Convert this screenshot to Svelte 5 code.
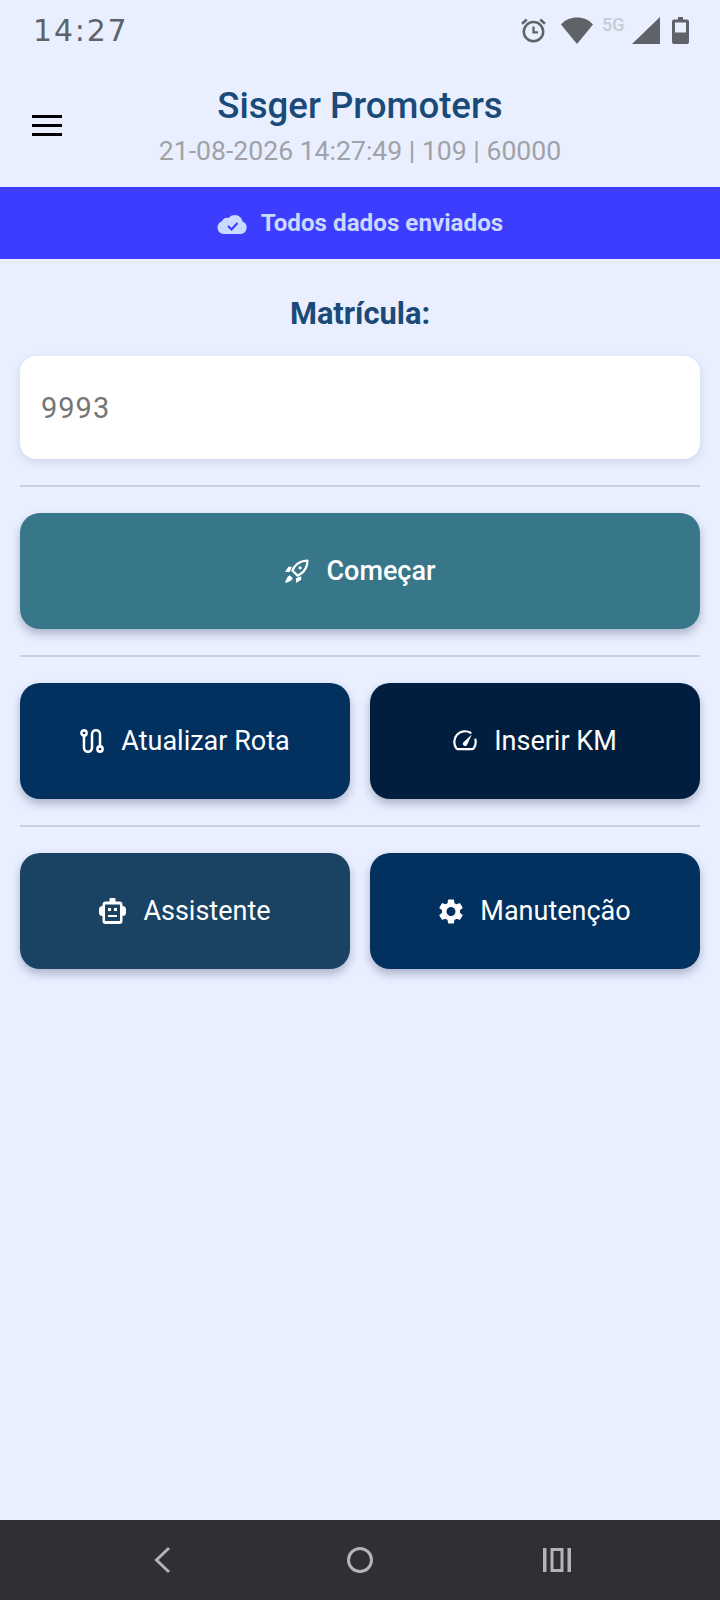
<script lang="ts">
  let matricula = $state('9993');
</script>

<div class="screen">
  <div class="status-bar">
    <span class="clock">14:27</span>
    <div class="status-icons">
      <svg class="alarm" viewBox="0 0 24 24" fill="none" stroke="#5f6368" stroke-width="2.2">
        <circle cx="12" cy="13" r="8.6" />
        <path d="M12 8.5V13.6H16" stroke-width="2" />
        <path d="M1.8 6 6 2.2M22.2 6 18 2.2" />
      </svg>
      <svg class="wifi" viewBox="0 0 32 27"><path d="M16 27 0 7.5C4 3 9.5 0.5 16 0.5S28 3 32 7.5Z" fill="#5f6368" /></svg>
      <span class="net">5G</span>
      <svg class="signal" viewBox="0 0 28 27"><path d="M28 0V27H0Z" fill="#5f6368" /></svg>
      <svg class="battery" viewBox="0 0 17 27">
        <path fill-rule="evenodd" fill="#5f6368" d="M6 0h5v2.5h4a2 2 0 0 1 2 2V25a2 2 0 0 1-2 2H2a2 2 0 0 1-2-2V4.500a2 2 0 0 1 2-2h4ZM3 5.500V15.500H14V5.500Z" />
      </svg>
    </div>
  </div>

  <header class="app-header">
    <button class="menu" aria-label="Menu"><span></span><span></span><span></span></button>
    <div class="titles">
      <h1>Sisger Promoters</h1>
      <p>21-08-2026 14:27:49 | 109 | 60000</p>
    </div>
  </header>

  <div class="banner">
    <svg viewBox="0 0 30 22" class="cloud">
      <path fill="#c9d9ff" d="M6.5 22A6.500 6.500 0 0 1 4.500 9.300 6 6 0 0 1 11 6 8 8 0 0 1 25 9.500 6.500 6.500 0 0 1 23.500 22Z" />
      <path d="M10.500 14 14 17.500 20 11" fill="none" stroke="#3d3dff" stroke-width="2.200" />
    </svg>
    <span>Todos dados enviados</span>
  </div>

  <main class="content">
    <label for="mat">Matrícula:</label>
    <input id="mat" bind:value={matricula} />
    <hr />
    <button class="btn teal">
      <svg class="ic-rocket" viewBox="0 0 24 24">
        <path fill="none" stroke="currentColor" stroke-width="2.200" stroke-linejoin="round" d="M22.500 1.500c-5.500 0-9.500 2-12.500 6L8 11l5 5 3.500-2c4-3 6-7 6-12.500z" />
        <circle cx="15.500" cy="8.500" r="1.600" fill="currentColor" />
        <path fill="currentColor" d="M7.500 7.500H4.200L1 12.500h4.500zM16.500 16.500v3.300L11.500 23v-4.500zM5.500 15.500c-2.500 1-3.500 4-4.500 7.500 3.500-1 6.500-2 7.500-4.500z" />
      </svg>
      Começar
    </button>
    <hr />
    <div class="row">
      <button class="btn navy">
        <svg class="ic-route" viewBox="1.500 1.500 21 21" fill="none" stroke="currentColor" stroke-width="2.200" stroke-linecap="round">
          <circle cx="5" cy="5" r="2.300" />
          <circle cx="19" cy="19" r="2.300" />
          <path d="M5 7.300V18a3.500 3.500 0 0 0 7 0V6a3.500 3.500 0 0 1 7 0v10.700" />
        </svg>
        Atualizar Rota
      </button>
      <button class="btn dark">
        <svg class="ic-gauge" viewBox="0 0 24 24">
          <path fill="none" stroke="currentColor" stroke-width="2.200" stroke-linecap="round" stroke-linejoin="round" d="M17.500 3.800A10.700 10.700 0 0 0 3.500 19.500q.6.700 1.500.7h14q.9 0 1.500-.7A10.700 10.700 0 0 0 22.400 10.500" />
          <path fill="currentColor" d="M18.800 5.500 14 16a2.300 2.300 0 0 1-3.800-2.600z" />
        </svg>
        Inserir KM
      </button>
    </div>
    <hr />
    <div class="row">
      <button class="btn slate">
        <svg class="ic-robot" viewBox="0 0 27 26">
          <path fill="currentColor" fill-rule="evenodd" d="M11.500 0h4a1 1 0 0 1 1 1v2.500h4a3 3 0 0 1 3 3V8A3.500 3.500 0 0 1 27 11.500v3a3.500 3.500 0 0 1-3.500 3.500v5a3 3 0 0 1-3 3h-14a3 3 0 0 1-3-3v-5A3.500 3.500 0 0 1 0 14.500v-3A3.500 3.500 0 0 1 3.500 8V6.500a3 3 0 0 1 3-3h4V1a1 1 0 0 1 1-1ZM6.500 6.500a.5.5 0 0 0-.5.5v15.500a.5.5 0 0 0 .5.5h14a.5.5 0 0 0 .5-.5V7a.5.5 0 0 0-.5-.5ZM9 10h3v3H9Zm6 0h3v3h-3ZM9 17h9v2H9Z" />
        </svg>
        Assistente
      </button>
      <button class="btn navy">
        <svg class="ic-cog" viewBox="2.500 2 19 20">
          <path fill="currentColor" d="M19.140 12.940c.04-.3.06-.61.06-.94 0-.32-.02-.64-.07-.94l2.030-1.580c.18-.14.23-.41.12-.61l-1.920-3.320c-.12-.22-.37-.29-.59-.22l-2.390.96c-.5-.38-1.030-.7-1.620-.94l-.36-2.540c-.04-.24-.24-.41-.48-.41h-3.840c-.24 0-.43.17-.47.41l-.36 2.540c-.59.24-1.130.57-1.620.94l-2.390-.96c-.22-.08-.47 0-.59.22L2.740 8.870c-.12.21-.08.47.12.61l2.030 1.580c-.05.3-.09.63-.09.94s.02.64.07.94l-2.030 1.580c-.18.14-.23.41-.12.61l1.920 3.320c.12.22.37.29.59.22l2.390-.96c.5.38 1.030.7 1.620.94l.36 2.540c.05.24.24.41.48.41h3.840c.24 0 .44-.17.47-.41l.36-2.540c.59-.24 1.130-.56 1.620-.94l2.390.96c.22.08.47 0 .59-.22l1.920-3.320c.12-.22.07-.47-.12-.61l-2.010-1.580zM12 15.600c-1.980 0-3.600-1.620-3.600-3.600s1.620-3.600 3.600-3.600 3.600 1.620 3.600 3.600-1.620 3.600-3.600 3.600z" />
        </svg>
        Manutenção
      </button>
    </div>
  </main>

  <nav class="nav-bar">
    <svg viewBox="0 0 18 28" class="back"><path d="M16 2 3.500 14 16 26" fill="none" stroke="#b4b4b6" stroke-width="3" /></svg>
    <span class="home"></span>
    <svg viewBox="0 0 28 24" class="recents">
      <path fill="#b4b4b6" fill-rule="evenodd" d="M0 0h3.500v24H0ZM24.500 0H28v24h-3.500ZM7.500 0h13v24h-13ZM10.500 3v18h7V3Z" />
    </svg>
  </nav>
</div>

<style>
  :global(body) { background: #e9efff; }
  .screen { width: 720px; height: 1600px; display: flex; flex-direction: column; background: #e9efff; font-family: Roboto, sans-serif; }

  .status-bar { height: 62px; display: flex; justify-content: space-between; align-items: flex-start; padding: 14px 31px 0 33px; box-sizing: border-box; }
  .clock { font-family: "DejaVu Sans", sans-serif; font-size: 30px; line-height: 34px; letter-spacing: 1.8px; color: #5f6368; }
  .status-icons { display: flex; align-items: flex-start; padding-top: 3px; }
  .status-icons svg { display: block; }
  .alarm { width: 27px; height: 27px; margin-right: 14px; }
  .wifi { width: 32px; height: 27px; margin-right: 9px; }
  .net { font-size: 18px; line-height: 16px; font-weight: 500; color: #c6cad4; width: 26px; margin-right: 4px; }
  .signal { width: 28px; height: 27px; margin-right: 12px; }
  .battery { width: 17px; height: 27px; }

  .app-header { height: 125px; display: flex; position: relative; justify-content: center; }
  .menu { position: absolute; left: 32px; top: 53px; width: 30px; display: flex; flex-direction: column; gap: 6px; padding: 0; border: none; background: none; }
  .menu span { display: block; height: 3px; background: #000; }
  .titles { text-align: center; padding-top: 23px; }
  h1 { margin: 0; font-size: 36.6px; line-height: 42px; font-weight: 500; color: #1a4a78; }
  .titles p { margin: 7px 0 0; font-size: 26.6px; line-height: 34px; color: #a0a2a6; }

  .banner { height: 72px; background: #3d3dff; display: flex; align-items: center; justify-content: center; gap: 13px; color: #c9d9ff; font-size: 24.2px; font-weight: 700; }
  .cloud { width: 31px; height: 22px; }

  .content { flex: 1; padding: 0 20px; display: flex; flex-direction: column; }
  label { text-align: center; font-size: 30.8px; line-height: 36px; font-weight: 700; color: #1a4a78; margin-top: 37px; margin-bottom: 24px; }
  input { height: 103px; box-sizing: border-box; border: none; outline: none; border-radius: 16px; background: #fff; padding: 0 21px; font: 400 29px Roboto, sans-serif; letter-spacing: 1px; color: #757575; box-shadow: 0 3px 8px rgba(40, 50, 90, 0.14); }
  hr { width: 100%; height: 2px; margin: 26px 0; border: none; background: #c9cee0; }
  .row { display: grid; grid-template-columns: 1fr 1fr; gap: 20px; }
  .btn { height: 116px; border: none; border-radius: 20px; display: flex; align-items: center; justify-content: center; gap: 17px; color: #fff; font: 500 27px Roboto, sans-serif; box-shadow: 0 5px 10px rgba(20, 30, 70, 0.28); }
  .row .btn { font-weight: 400; }
  .btn svg { flex: none; }
  .ic-rocket { width: 25px; height: 25px; }
  .ic-route { width: 24px; height: 24px; }
  .ic-gauge { width: 24px; height: 24px; }
  .ic-robot { width: 27px; height: 26px; }
  .ic-cog { width: 24px; height: 25px; }
  .teal { background: #38778a; }
  .navy { background: #02305f; }
  .dark { background: #021e3f; }
  .slate { background: #1a4263; }

  .nav-bar { height: 80px; flex: none; background: #2f3033; position: relative; display: flex; align-items: center; justify-content: center; }
  .back { position: absolute; left: 153px; top: 26px; width: 18px; height: 28px; }
  .home { width: 26px; height: 26px; border: 3px solid #b4b4b6; border-radius: 50%; box-sizing: border-box; }
  .recents { position: absolute; left: 543px; top: 28px; width: 28px; height: 24px; }
</style>
